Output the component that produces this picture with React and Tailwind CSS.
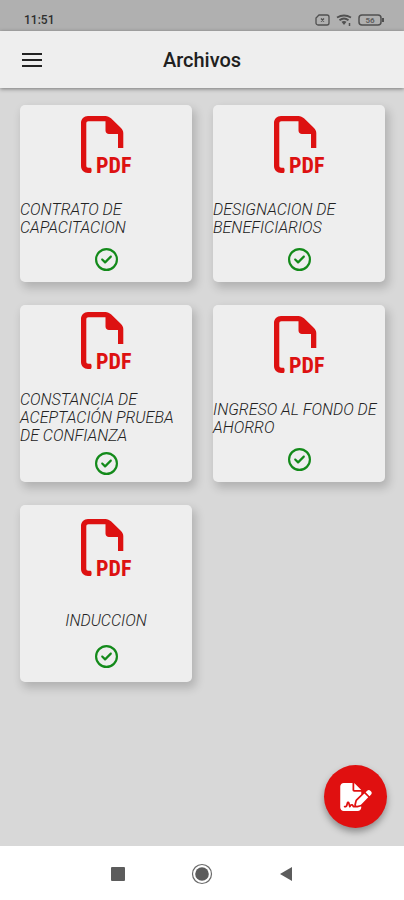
import { FaRegCircleCheck, FaFileSignature } from "react-icons/fa6";

const files = [
  "CONTRATO DE CAPACITACION",
  "DESIGNACION DE BENEFICIARIOS",
  "CONSTANCIA DE ACEPTACIÓN PRUEBA DE CONFIANZA",
  "INGRESO AL FONDO DE AHORRO",
  "INDUCCION",
];

function StatusBar() {
  return (
    <div className="flex h-[31px] items-end justify-between bg-[#b0b0b0] pr-5 pb-[3px] pl-6 text-[#2e2e2e]">
      <span className="text-[12px] leading-4 font-medium">11:51</span>
      <div className="flex h-4 items-center gap-[6px]" aria-hidden="true">
        <svg className="h-3 w-[15px]" viewBox="0 0 15 12" fill="none" stroke="#505050" strokeWidth="1.3">
          <path d="M4 1h8a2 2 0 0 1 2 2v6a2 2 0 0 1-2 2H3a2 2 0 0 1-2-2V4Z" />
          <path d="M6 4.5 9 7.5M9 4.5 6 7.5" />
        </svg>
        <svg className="h-3 w-4" viewBox="0 0 16 12" fill="none" stroke="#505050" strokeWidth="1.8">
          <path d="M1 3.500q7-4 14 0M3.500 6.300q4.500-3.500 9 0" />
          <path d="M5.500 7.800q2.500-1.500 5 0L8 11Z" fill="#505050" stroke="none" />
          <path d="M13.500 9v3" strokeWidth="1.500" />
        </svg>
        <svg className="h-3 w-[26px]" viewBox="0 0 26 12" fill="none" stroke="#505050" strokeWidth="1.500">
          <rect x="1" y="1" width="22" height="10" rx="3" />
          <path d="M25 4v4" strokeWidth="2" />
          <text x="12" y="9" textAnchor="middle" fontSize="8" fontWeight="700" fill="#606060" stroke="none">56</text>
        </svg>
      </div>
    </div>
  );
}

function PdfIcon() {
  return (
    <svg className="h-[64px] w-[52px] shrink-0" viewBox="-1 0 52 64" fill="#dd1111" role="img" aria-label="PDF">
      <path d="M7 0H24.500c2 0 4 1 5.500 2.300L40 12c1.500 1.500 2.300 3.200 2.300 5.200V32H37V18H28c-2 0-3.500-1.500-3.500-3.500V5.300H7.500C6 5.300 5.300 6 5.300 7.500V49.500c0 1.500.7 2.200 2.200 2.200H9.500c1.500 0 1.500 5.300 0 5.300H7c-4 0-7-3-7-7V7c0-4 3-7 7-7Z" />
      <text
        x="15"
        y="57"
        className="font-['Liberation_Sans_Narrow','Roboto_Condensed','Open_Sans_Condensed',Roboto,sans-serif] text-[22px] font-bold"
      >
        PDF
      </text>
    </svg>
  );
}

function FileCard({ name }) {
  return (
    <li className="flex h-[177px] flex-col items-center justify-evenly rounded-[5px] bg-[#eeeeee] shadow-[3px_5px_10px_1px_rgba(0,0,0,0.18)]">
      <PdfIcon />
      <span className="h-0" />
      <p className="text-[16px] leading-[18px] font-light text-[#222222] italic">{name}</p>
      <FaRegCircleCheck className="size-[23px] shrink-0 text-[#138a1a]" />
    </li>
  );
}

export default function App() {
  return (
    <div className="flex min-h-screen flex-col bg-[#d8d8d8] font-[Roboto,sans-serif]">
      <StatusBar />
      <header className="relative z-10 grid h-[57px] grid-cols-[1fr_auto_1fr] items-center bg-[#eeeeee] px-[18px] text-[#202020] shadow-[0_1px_4px_rgba(0,0,0,0.45)]">
        <button type="button" aria-label="Menú" className="justify-self-start">
          <svg className="size-7" viewBox="0 0 28 28" fill="none" stroke="#222222" strokeWidth="2">
            <path d="M4 8h20M4 14h20M4 20h20" />
          </svg>
        </button>
        <h1 className="text-[20px] leading-6 font-medium">Archivos</h1>
      </header>
      <main className="relative flex-1 pt-[17px] pr-[19px] pb-24 pl-5">
        <ul className="grid grid-cols-2 gap-x-[21px] gap-y-[23px]">
          {files.map((name) => (
            <FileCard key={name} name={name} />
          ))}
        </ul>
        <button
          type="button"
          aria-label="Firmar documento"
          className="absolute right-[17px] bottom-[18px] flex size-[63px] items-center justify-center rounded-full bg-[#e01010] text-white shadow-[0_4px_7px_rgba(0,0,0,0.35)]"
        >
          <FaFileSignature className="h-7 w-8" />
        </button>
      </main>
      <nav aria-label="Sistema" className="flex h-[54px] items-center justify-center gap-[60px] bg-white pt-[2px]">
        <button type="button" aria-label="Recientes" className="flex size-6 items-center justify-center">
          <svg className="size-[14px]" viewBox="0 0 14 14"><rect width="14" height="14" rx="1" fill="#5c5c5c" /></svg>
        </button>
        <button type="button" aria-label="Inicio" className="flex size-6 items-center justify-center">
          <svg className="size-[22px]" viewBox="0 0 22 22">
            <circle cx="11" cy="11" r="9.500" fill="none" stroke="#6a6a6a" strokeWidth="1.200" />
            <circle cx="11" cy="11" r="6.800" fill="#5c5c5c" />
          </svg>
        </button>
        <button type="button" aria-label="Atrás" className="flex size-6 items-center justify-center">
          <svg className="size-[14px]" viewBox="0 0 14 14"><path d="M13 0v14L1 7Z" fill="#5c5c5c" /></svg>
        </button>
      </nav>
    </div>
  );
}
